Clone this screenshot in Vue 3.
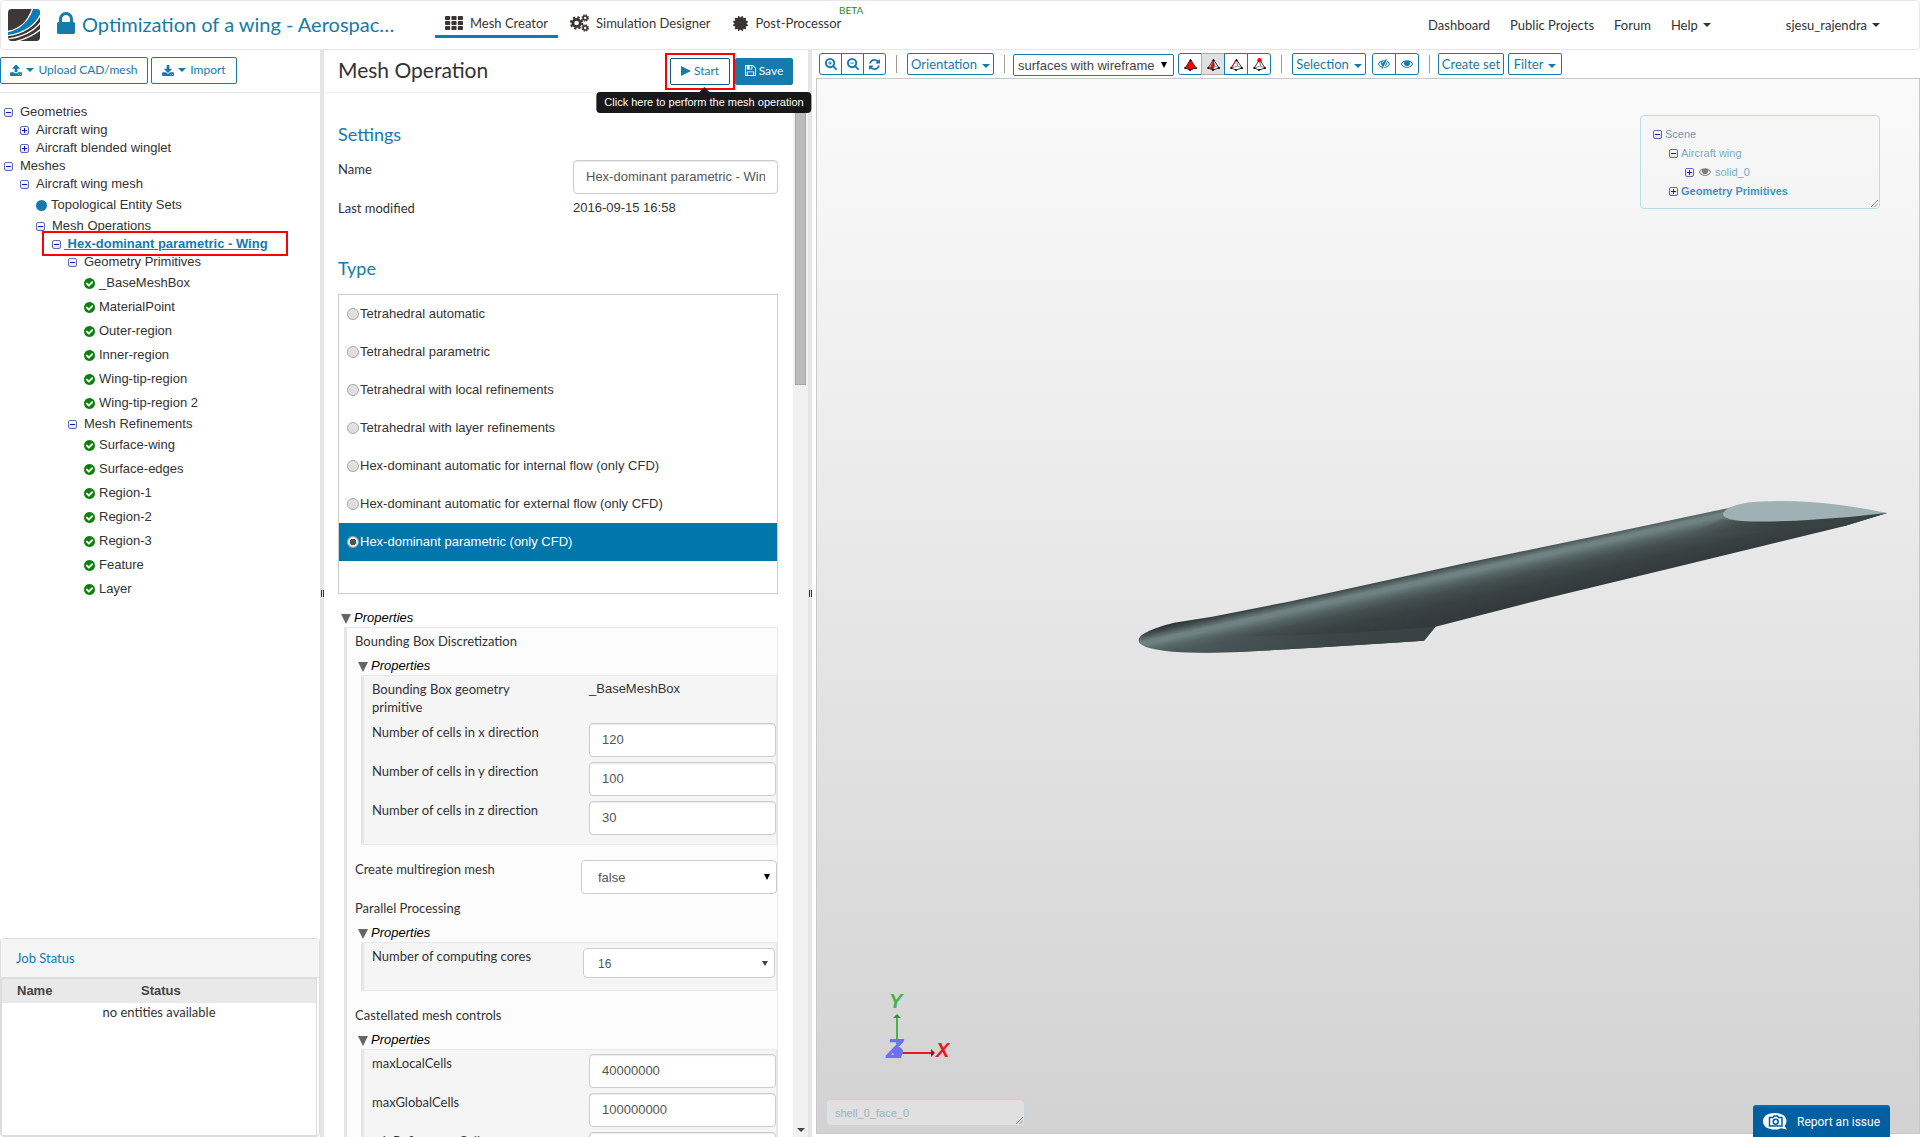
<script setup>
import { ref } from 'vue'

const P = {
  lock: 'M640 768h512v-192q0-106-75-181t-181-75-181 75-75 181v192zm832 96v576q0 40-28 68t-68 28h-960q-40 0-68-28t-28-68v-576q0-40 28-68t68-28h32v-192q0-184 132-316t316-132 316 132 132 316v192h32q40 0 68 28t28 68z',
  check: 'M1412 734q0-28-18-46l-91-90q-19-19-45-19t-45 19l-408 407-226-226q-19-19-45-19t-45 19l-91 90q-18 18-18 46 0 27 18 45l362 362q19 19 45 19 27 0 46-19l543-543q18-18 18-45zm252 162q0 209-103 385.5t-279.5 279.5-385.5 103-385.5-103-279.5-279.5-103-385.5 103-385.5 279.5-279.5 385.5-103 385.5 103 279.5 279.5 103 385.5z',
  refresh: 'M1639 1056q0 5-1 7-64 268-268 434.5t-478 166.5q-146 0-282.5-55t-243.5-157l-129 129q-19 19-45 19t-45-19-19-45v-448q0-26 19-45t45-19h448q26 0 45 19t19 45-19 45l-137 137q71 66 161 102t187 36q134 0 250-65t186-179q11-17 53-117 8-23 30-23h192q13 0 22.5 9.5t9.5 22.5zm25-800v448q0 26-19 45t-45 19h-448q-26 0-45-19t-19-45 19-45l138-138q-148-137-349-137-134 0-250 65t-186 179q-11 17-53 117-8 23-30 23h-199q-13 0-22.5-9.5t-9.5-22.5v-7q65-268 270-434.5t480-166.5q146 0 284 55.5t245 156.5l130-129q19-19 45-19t45 19 19 45z',
  lens: 'M1216 832q0-185-131.5-316.5t-316.5-131.5-316.5 131.5-131.5 316.5 131.5 316.5 316.5 131.5 316.5-131.5 131.5-316.5zm512 832q0 53-37.5 90.5t-90.5 37.5q-54 0-90-38l-343-342q-179 124-399 124-143 0-273.5-55.5t-225-150-150-225-55.5-273.5 55.5-273.5 150-225 225-150 273.5-55.5 273.5 55.5 225 150 150 225 55.5 273.5q0 220-124 399l343 343q37 37 37 90z',
  eye: 'M1664 960q-152-236-381-353 61 104 61 225 0 185-131.5 316.5t-316.5 131.5-316.5-131.5-131.5-316.5q0-121 61-225-229 117-381 353 133 205 333.5 326.5t434.5 121.5 434.5-121.5 333.5-326.5zm-720-384q0-20-14-34t-34-14q-125 0-214.5 89.5t-89.5 214.5q0 20 14 34t34 14 34-14 14-34q0-86 61-147t147-61q20 0 34-14t14-34zm848 384q0 34-20 69-140 230-376.5 368.5t-499.5 138.5-499.5-139-376.5-368q-20-35-20-69t20-69q140-229 376.5-368t499.5-139 499.5 139 376.5 368q20 35 20 69z',
  upload: 'M1344 1472q0-26-19-45t-45-19-45 19-19 45 19 45 45 19 45-19 19-45zm256 0q0-26-19-45t-45-19-45 19-19 45 19 45 45 19 45-19 19-45zm128-224v320q0 40-28 68t-68 28h-1472q-40 0-68-28t-28-68v-320q0-40 28-68t68-28h427q21 56 70.5 92t110.5 36h256q61 0 110.5-36t70.5-92h427q40 0 68 28t28 68zm-325-648q-17 40-59 40h-256v448q0 26-19 45t-45 19h-256q-26 0-45-19t-19-45v-448h-256q-42 0-59-40-17-39 14-69l448-448q18-19 45-19t45 19l448 448q31 30 14 69z',
  download: 'M1344 1344q0-26-19-45t-45-19-45 19-19 45 19 45 45 19 45-19 19-45zm256 0q0-26-19-45t-45-19-45 19-19 45 19 45 45 19 45-19 19-45zm128-224v320q0 40-28 68t-68 28h-1472q-40 0-68-28t-28-68v-320q0-40 28-68t68-28h465l135 136q58 56 136 56t136-56l136-136h464q40 0 68 28t28 68zm-325-569q17 41-14 70l-448 448q-18 19-45 19t-45-19l-448-448q-31-29-14-70 17-39 59-39h256v-448q0-26 19-45t45-19h256q26 0 45 19t19 45v448h256q42 0 59 39z',
  floppy: 'M512 1536h768v-384h-768v384zm896 0h128v-896q0-14-10-38.5t-20-34.5l-281-281q-10-10-34-20t-39-10v416q0 40-28 68t-68 28h-576q-40 0-68-28t-28-68v-416h-128v1280h128v-416q0-40 28-68t68-28h832q40 0 68 28t28 68v416zm-384-928v-320q0-13-9.5-22.5t-22.5-9.5h-192q-13 0-22.5 9.5t-9.5 22.5v320q0 13 9.5 22.5t22.5 9.5h192q13 0 22.5-9.5t9.5-22.5zm640 32v928q0 40-28 68t-68 28h-1344q-40 0-68-28t-28-68v-1344q0-40 28-68t68-28h928q40 0 88 20t76 48l280 280q28 28 48 76t20 88z',
  burst: 'M1504 896l138 135q30 28 20 70-12 41-52 51l-188 48 53 186q12 41-19 70-29 31-70 19l-186-53-48 188q-10 40-51 52-12 2-19 2-31 0-51-22l-135-138-135 138q-28 30-70 20-41-11-51-52l-48-188-186 53q-41 12-70-19-31-29-19-70l53-186-188-48q-40-10-52-51-10-42 20-70l138-135-138-135q-30-28-20-70 12-41 52-51l188-48-53-186q-12-41 19-70 29-31 70-19l186 53 48-188q10-41 51-51 41-12 70 19l135 139 135-139q29-30 70-19 41 10 51 51l48 188 186-53q41-12 70 19 31 29 19 70l-53 186 188 48q40 10 52 51 10 42-20 70z',
}

const tree = [
  { t: 'Geometries', d: 0, k: 'minus' },
  { t: 'Aircraft wing', d: 1, k: 'plus' },
  { t: 'Aircraft blended winglet', d: 1, k: 'plus' },
  { t: 'Meshes', d: 0, k: 'minus' },
  { t: 'Aircraft wing mesh', d: 1, k: 'minus' },
  { t: 'Topological Entity Sets', d: 2, k: 'dot' },
  { t: 'Mesh Operations', d: 2, k: 'minus' },
  { t: 'Hex-dominant parametric - Wing', d: 3, k: 'minus', active: true },
  { t: 'Geometry Primitives', d: 4, k: 'minus' },
  ...['_BaseMeshBox', 'MaterialPoint', 'Outer-region', 'Inner-region', 'Wing-tip-region', 'Wing-tip-region 2'].map((t) => ({ t, d: 5, k: 'check' })),
  { t: 'Mesh Refinements', d: 4, k: 'minus' },
  ...['Surface-wing', 'Surface-edges', 'Region-1', 'Region-2', 'Region-3', 'Feature', 'Layer'].map((t) => ({ t, d: 5, k: 'check' })),
]

const scene = [
  { t: 'Scene', d: 0, k: 'minus', c: 'top-level' },
  { t: 'Aircraft wing', d: 1, k: 'minus', c: 'part' },
  { t: 'solid_0', d: 2, k: 'plus', c: 'part', eye: true },
  { t: 'Geometry Primitives', d: 1, k: 'plus', c: 'strong' },
]

const types = [
  'Tetrahedral automatic',
  'Tetrahedral parametric',
  'Tetrahedral with local refinements',
  'Tetrahedral with layer refinements',
  'Hex-dominant automatic for internal flow (only CFD)',
  'Hex-dominant automatic for external flow (only CFD)',
  'Hex-dominant parametric (only CFD)',
]
const type = ref(types[6])
const opName = ref('Hex-dominant parametric - Wing')
const cells = ref([
  { axis: 'x', n: '120' },
  { axis: 'y', n: '100' },
  { axis: 'z', n: '30' },
])
const limits = ref([
  { name: 'maxLocalCells', n: '40000000' },
  { name: 'maxGlobalCells', n: '100000000' },
  { name: 'minRefinementCells', n: '10' },
])
const picks = [
  { label: 'Pick volumes', fill: 'all' },
  { label: 'Pick faces', fill: 'face' },
  { label: 'Pick edges', fill: 'edge' },
  { label: 'Pick vertices', fill: 'node' },
]
</script>

<template>
  <div class="app">
    <header class="top">
      <svg class="logo" viewBox="0 0 96 96" aria-hidden="true">
        <defs><clipPath id="logoClip"><rect width="96" height="96" rx="11" /></clipPath></defs>
        <g clip-path="url(#logoClip)">
          <rect width="96" height="96" fill="#3d3835" />
          <path d="M74 0C60 38 38 60 0 68V80C46 72 80 50 96 18V0Z" fill="#0b7ab5" />
          <g fill="none" stroke="#fff" stroke-width="4">
            <path d="M74 -2C60 38 38 60 -2 68" />
            <path d="M98 16C82 50 46 74 -2 80" />
            <path d="M98 40C78 66 46 84 -2 90" />
            <path d="M98 61C76 80 52 90 22 98" />
          </g>
        </g>
      </svg>
      <svg class="lock" viewBox="320 128 1152 1408" aria-hidden="true"><path :d="P.lock" /></svg>
      <a class="project" href="#">Optimization of a wing - Aerospac…</a>
      <nav class="tabs">
        <a href="#" class="tab current">
          <svg width="18" height="14" viewBox="0 0 18 14" aria-hidden="true">
            <template v-for="r in 3" :key="r"><rect v-for="c in 3" :key="c" :x="(c - 1) * 6.4" :y="(r - 1) * 5" width="5.2" height="4" rx="1" /></template>
          </svg>
          Mesh Creator
        </a>
        <a href="#" class="tab">
          <svg width="19" height="18" viewBox="0 0 19 18" aria-hidden="true">
            <g fill="none" stroke="#3a3532">
              <circle cx="6.6" cy="9" r="3.7" stroke-width="2.8" />
              <circle cx="6.6" cy="9" r="5.7" stroke-width="2" stroke-dasharray="2.4 2.08" />
              <circle cx="15.2" cy="4" r="2" stroke-width="1.6" />
              <circle cx="15.2" cy="4" r="3.1" stroke-width="1.2" stroke-dasharray="1.5 0.93" />
              <circle cx="15.2" cy="14" r="2" stroke-width="1.6" />
              <circle cx="15.2" cy="14" r="3.1" stroke-width="1.2" stroke-dasharray="1.5 0.93" />
            </g>
          </svg>
          Simulation Designer
        </a>
        <a href="#" class="tab">
          <svg class="burst" width="15" height="15" viewBox="128 128 1536 1536" aria-hidden="true"><path :d="P.burst" /></svg>
          Post-Processor
          <sup class="beta">BETA</sup>
        </a>
      </nav>
      <nav class="links">
        <a href="#">Dashboard</a>
        <a href="#">Public Projects</a>
        <a href="#">Forum</a>
        <a href="#">Help <i class="caret"></i></a>
        <a href="#" class="user">sjesu_rajendra <i class="caret"></i></a>
      </nav>
    </header>

    <div class="work">
      <aside class="side">
        <div class="actions">
          <button class="btn upload"><svg width="12" height="11" viewBox="64 128 1664 1536"><path :d="P.upload" /></svg><i class="caret"></i>Upload CAD/mesh</button>
          <button class="btn import"><svg width="12" height="11" viewBox="64 0 1664 1536"><path :d="P.download" /></svg><i class="caret"></i>Import</button>
        </div>
        <ul class="tree">
          <li v-for="n in tree" :key="n.t" :class="['node', n.k, 'd' + n.d, { active: n.active }]">
            <svg v-if="n.k === 'check'" class="ok" viewBox="128 128 1536 1536"><path :d="P.check" /></svg>
            <span v-else-if="n.k === 'dot'" class="bullet"></span>
            <span v-else :class="['box', n.k]"></span>
            <a v-if="n.active" href="#">&nbsp;{{ n.t }}</a>
            <span v-else class="txt">{{ n.t }}</span>
          </li>
        </ul>
        <section class="jobs">
          <h4>Job Status</h4>
          <div class="jobbox">
            <table>
              <thead><tr><th class="jn">Name</th><th>Status</th></tr></thead>
              <tbody><tr><td colspan="2">no entities available</td></tr></tbody>
            </table>
          </div>
        </section>
      </aside>

      <div class="split"><i></i></div>

      <main class="panel">
        <div class="phead">
          <h2>Mesh Operation</h2>
          <div class="startwrap">
            <button class="btn start"><svg width="10" height="10" viewBox="0 0 10 10"><path d="M0 0L10 5L0 10Z" /></svg>Start</button>
            <div class="tip" role="tooltip">Click here to perform the mesh operation</div>
          </div>
          <button class="btn save"><svg width="11" height="11" viewBox="128 128 1536 1536"><path :d="P.floppy" /></svg>Save</button>
        </div>
        <div class="pbody">
          <form class="form" @submit.prevent>
            <h3 class="first">Settings</h3>
            <div class="row set"><label for="opname">Name</label><input id="opname" v-model="opName" class="ctl" type="text" /></div>
            <div class="row set"><span class="lab">Last modified</span><span class="val">2016-09-15 16:58</span></div>
            <h3 class="second">Type</h3>
            <div class="types">
              <label v-for="t in types" :key="t" :class="{ on: t === type }"><input v-model="type" type="radio" name="type" :value="t" />{{ t }}</label>
            </div>

            <details class="main" open>
              <summary>Properties</summary>
              <div class="props outer">
                <div class="sect">Bounding Box Discretization</div>
                <details open>
                  <summary>Properties</summary>
                  <div class="props inner">
                    <div class="row"><span class="lab">Bounding Box geometry primitive</span><span class="val">_BaseMeshBox</span></div>
                    <div v-for="c in cells" :key="c.axis" class="row">
                      <label :for="'cells-' + c.axis">Number of cells in {{ c.axis }} direction</label>
                      <input :id="'cells-' + c.axis" v-model="c.n" class="ctl" type="text" />
                    </div>
                  </div>
                </details>
                <div class="row multi">
                  <label for="multi">Create multiregion mesh</label>
                  <div class="sel"><select id="multi" class="ctl"><option>false</option><option>true</option></select></div>
                </div>
                <div class="sect">Parallel Processing</div>
                <details open>
                  <summary>Properties</summary>
                  <div class="props inner">
                    <div class="row cores">
                      <label for="cores">Number of computing cores</label>
                      <div class="sel small"><select id="cores" class="ctl"><option>16</option><option>32</option></select></div>
                    </div>
                  </div>
                </details>
                <div class="sect">Castellated mesh controls</div>
                <details open>
                  <summary>Properties</summary>
                  <div class="props inner">
                    <div v-for="l in limits" :key="l.name" class="row">
                      <label :for="l.name">{{ l.name }}</label>
                      <input :id="l.name" v-model="l.n" class="ctl" type="text" />
                    </div>
                  </div>
                </details>
              </div>
            </details>
          </form>
          <div class="bar"><div class="thumb"></div><i class="down"></i></div>
        </div>
      </main>

      <div class="split"><i></i></div>

      <section class="viewer">
        <div class="tools">
          <div class="group g22">
            <button aria-label="Zoom in"><svg width="12" height="12" viewBox="64 128 1664 1664"><path :d="P.lens" /><path d="M704 576h128v192h192v128h-192v192h-128v-192h-192v-128h192z" /></svg></button>
            <button aria-label="Zoom out"><svg width="12" height="12" viewBox="64 128 1664 1664"><path :d="P.lens" /><path d="M512 768h512v128h-512z" /></svg></button>
            <button aria-label="Reset view"><svg width="11" height="11" viewBox="128 128 1536 1536"><path :d="P.refresh" /></svg></button>
          </div>
          <i class="sep"></i>
          <button class="tb orient">Orientation <i class="caret"></i></button>
          <i class="sep"></i>
          <div class="mode"><select aria-label="Render mode"><option>surfaces with wireframe</option><option>surfaces</option></select></div>
          <div class="group g23">
            <button v-for="p in picks" :key="p.fill" :aria-label="p.label" :class="{ pressed: p.fill === 'face' }">
              <svg width="13" height="13" viewBox="0 0 13 13">
                <path d="M6.5 1.5L1.2 10L6 12L12 10Z" :fill="p.fill === 'all' ? '#f00' : '#fff'" />
                <path v-if="p.fill === 'face'" d="M6.5 1.5L2.6 10.6L6.4 12L7.6 8Z" fill="#f00" />
                <path d="M6.5 1.5L1.2 10L6 12L12 10Z" fill="none" stroke="#222" stroke-width="0.9" />
                <path v-if="p.fill !== 'all'" d="M6.5 1.5L7.6 8M1.2 10L7.6 8L12 10" fill="none" stroke="#555" stroke-width="0.7" />
                <path v-if="p.fill === 'edge'" d="M6.5 1.5L1.2 10" stroke="#f00" stroke-width="1" />
                <circle v-for="(c, i) in [[1.2, 10], [6, 12], [12, 10]]" :key="i" :cx="c[0]" :cy="c[1]" r="1" fill="#000" />
                <circle cx="6.5" cy="2.2" :r="p.fill === 'node' ? 2.2 : 1" :fill="p.fill === 'node' ? '#f00' : '#000'" />
              </svg>
            </button>
          </div>
          <i class="sep"></i>
          <button class="tb pick">Selection <i class="caret"></i></button>
          <div class="group g23 eyes">
            <button aria-label="Hide selection">
              <svg width="12" height="10" viewBox="0 230 1792 1460"><path :d="P.eye" /><path d="M1390 240L730 1660" stroke="#fff" stroke-width="170" /><path d="M1250 240L590 1660" stroke="#157aac" stroke-width="170" /></svg>
            </button>
            <button aria-label="Show all"><svg width="12" height="8" viewBox="0 384 1792 1152"><path :d="P.eye" /><circle cx="896" cy="832" r="330" /></svg></button>
          </div>
          <i class="sep"></i>
          <button class="tb create">Create set</button>
          <button class="tb filter">Filter <i class="caret"></i></button>
        </div>

        <div class="stage">
          <svg class="wing" viewBox="1138 500 750 154" aria-label="Wing geometry">
            <defs>
              <linearGradient id="skin" gradientUnits="userSpaceOnUse" x1="1464.4" y1="558.3" x2="1481.7" y2="636.4">
                <stop offset="0" stop-color="#2b3133" />
                <stop offset="0.06" stop-color="#3f494a" />
                <stop offset="0.15" stop-color="#6f8181" />
                <stop offset="0.19" stop-color="#6f8181" />
                <stop offset="0.27" stop-color="#566464" />
                <stop offset="0.36" stop-color="#444f50" />
                <stop offset="0.5" stop-color="#394243" />
                <stop offset="0.7" stop-color="#33393c" />
                <stop offset="1" stop-color="#33393c" />
              </linearGradient>
              <linearGradient id="rib" x1="0" x2="1" y1="0" y2="0">
                <stop offset="0" stop-color="#6a7b7b" stop-opacity="0" />
                <stop offset="0.25" stop-color="#4c5a5b" stop-opacity="0.6" />
                <stop offset="0.6" stop-color="#3c4647" />
                <stop offset="1" stop-color="#394243" />
              </linearGradient>
              <linearGradient id="under" x1="0" x2="1" y1="0" y2="0">
                <stop offset="0" stop-color="#3b4546" stop-opacity="0" />
                <stop offset="0.5" stop-color="#394243" />
                <stop offset="1" stop-color="#394243" />
              </linearGradient>
            </defs>
            <path d="M1138.6 640C1139 635 1149 629 1174 622.7L1212 616.7L1288.6 601.7L1467 562.7L1620 531L1730 507.7L1760 503L1887 513L1844.7 526L1671 568.3L1543.7 599L1435.5 626.7L1424 640.7L1385.5 643.3L1314 647.7L1253 651.3Q1222 653 1202 652.7Q1180 652.5 1166 651C1147 648.5 1138 645 1138.6 640Z" fill="url(#skin)" />
            <path d="M1150 646L1220 637Q1340 635 1435.5 626.7L1424 640.7L1385.5 643.3L1314 647.7L1253 651.3Q1222 653 1202 652.7Q1180 652.5 1166 651Q1154 649 1150 646Z" fill="url(#rib)" />
            <path d="M1690 533Q1780 531 1844.7 526L1887 513L1829 518L1740 521L1722 519Z" fill="url(#under)" />
            <path d="M1723 514C1724 508 1738 502.5 1760 501.4Q1800 499.5 1840 505Q1866 508.5 1887 513Q1850 517.5 1815 519.5Q1780 522 1752 521.5Q1723 520.5 1723 514Z" fill="#9fb1b5" />
          </svg>

          <div class="scene">
            <div v-for="s in scene" :key="s.t" :class="['snode', 's' + s.d, s.c]">
              <span :class="['box', s.k]"></span>
              <svg v-if="s.eye" class="seye" viewBox="0 384 1792 1152"><path :d="P.eye" /><circle cx="896" cy="832" r="330" /></svg>
              <span>{{ s.t }}</span>
            </div>
            <svg class="grip" viewBox="0 0 8 8"><path d="M0 8L8 0M4 8L8 4" /></svg>
          </div>

          <svg class="axes" viewBox="0 0 80 80" aria-label="Axis orientation">
            <path d="M17 60V34" stroke="#46b446" stroke-width="2" />
            <path d="M13 34L17 30L21 34Z" fill="#3c8f3c" />
            <path d="M18 69H51" stroke="#e81a1a" stroke-width="2" />
            <path d="M51 65L55 69L51 73Z" fill="#9c1414" />
            <circle cx="18" cy="68" r="5" fill="#6f6ff5" />
            <text x="9" y="24" class="ay">Y</text>
            <text x="6" y="74" class="az">Z</text>
            <text x="56" y="73" class="ax">X</text>
          </svg>

          <div class="picked">shell_0_face_0<svg class="grip" viewBox="0 0 8 8"><path d="M0 8L8 0M4 8L8 4" /></svg></div>
        </div>
      </section>
    </div>

    <button class="report">
      <svg width="24" height="17" viewBox="0 0 24 17" aria-hidden="true">
        <path d="M12 0C19 0 23.5 3 23.5 8Q23.5 11 21.5 13L24 16.5L18 15.3Q15 16.5 12 16.5C5 16.5 0 13.5 0 8.2S5 0 12 0Z" fill="#fff" />
        <path d="M6.5 4.5H10L11 3H14.5L15.5 4.5H19V13H6.5Z" fill="none" stroke="#005f9f" stroke-width="1.5" />
        <circle cx="12.7" cy="8.7" r="2.5" fill="none" stroke="#005f9f" stroke-width="1.5" />
      </svg>
      Report an issue
    </button>
  </div>
</template>

<style>
body {
  background: #fff;
}
</style>

<style scoped>
.app {
  --blue: #157aac;
  --sans: "Liberation Sans", Arial, sans-serif;
  --lato: Lato, "Liberation Sans", sans-serif;
  height: 100vh;
  display: flex;
  flex-direction: column;
  overflow: hidden;
  font: 13px/18px var(--sans);
  color: #333;
  position: relative;
}
.app *,
.app *::before,
.app *::after {
  box-sizing: border-box;
}
a {
  color: inherit;
  text-decoration: none;
}
h2,
h3,
h4 {
  margin: 0;
  font-family: var(--lato);
  font-weight: 400;
}
button {
  cursor: pointer;
  padding: 0;
}
svg {
  fill: currentColor;
  flex: none;
}
.caret {
  display: inline-block;
  border: 4px solid transparent;
  border-top-color: currentColor;
  border-bottom: 0;
}

/* top bar */
.top {
  height: 50px;
  flex: none;
  border: 1px solid #e7e7e7;
  border-radius: 4px;
  display: flex;
  align-items: center;
  padding: 0 39px 0 7px;
  font-family: var(--lato);
}
.logo {
  width: 32px;
  height: 32px;
}
.lock {
  width: 18px;
  height: 22px;
  margin: 0 7px 4px 17px;
  color: var(--blue);
}
.project {
  color: var(--blue);
  font-size: 20px;
  line-height: 26px;
  flex: none;
  width: 353px;
  padding-bottom: 3px;
}
.tabs {
  display: flex;
  gap: 2px;
  height: 100%;
  align-items: flex-start;
}
.tab {
  position: relative;
  display: flex;
  align-items: center;
  gap: 7px;
  height: 37px;
  padding: 10px 10px 0;
  border-bottom: 3px solid transparent;
  white-space: nowrap;
  color: #3a3532;
}
.tab.current {
  border-color: var(--blue);
}
.burst {
  margin-right: 1px;
}
.beta {
  position: absolute;
  right: -12px;
  top: 2px;
  font-size: 10px;
  line-height: 14px;
  color: #1e8a1e;
}
.links {
  margin-left: auto;
  display: flex;
  gap: 20px;
}
.links a {
  display: flex;
  align-items: center;
  gap: 5px;
}
.links .user {
  margin-left: 55px;
}

.work {
  flex: 1;
  min-height: 0;
  display: flex;
}
.split {
  width: 4px;
  flex: none;
  background: #e5e5e5;
  display: flex;
  align-items: center;
  justify-content: center;
}
.split i {
  width: 3px;
  height: 7px;
  border: solid #333;
  border-width: 0 1px;
}

.btn {
  height: 27px;
  display: flex;
  align-items: center;
  justify-content: center;
  padding-bottom: 1px;
  background: #fff;
  color: var(--blue);
  border: 1px solid var(--blue);
  border-radius: 2px;
  font: 12px/18px var(--lato);
  white-space: nowrap;
}

/* left column */
.side {
  width: 320px;
  flex: none;
  display: flex;
  flex-direction: column;
}
.actions {
  display: flex;
  gap: 3px;
  height: 43px;
  padding-top: 7px;
  border-bottom: 1px solid #e5e5e5;
}
.actions .btn {
  gap: 4px;
}
.upload {
  width: 148px;
}
.import {
  width: 86px;
}
.tree {
  list-style: none;
  margin: 10px 0 0;
  padding: 0;
  flex: 1;
  min-height: 0;
}
.node {
  position: relative;
  display: flex;
  align-items: center;
  height: 18px;
  padding-left: 4px;
}
.node.check,
.node.dot {
  height: 24px;
}
.d1 { padding-left: 20px; }
.d2 { padding-left: 36px; }
.d3 { padding-left: 52px; }
.d4 { padding-left: 68px; }
.d5 { padding-left: 84px; }
.box {
  position: relative;
  width: 9px;
  height: 9px;
  flex: none;
  border: 1px solid #5a6cae;
  border-radius: 2px;
  margin: 1px 7px 0 0;
  background: linear-gradient(#fff, #e3e3ee);
}
.box::before {
  content: "";
  position: absolute;
  left: 1px;
  top: 3px;
  width: 5px;
  height: 1px;
  background: #1212c8;
}
.box.plus::after {
  content: "";
  position: absolute;
  left: 3px;
  top: 1px;
  width: 1px;
  height: 5px;
  background: #1212c8;
}
.bullet {
  width: 11px;
  height: 11px;
  border-radius: 50%;
  background: var(--blue);
  margin-right: 4px;
}
.ok {
  width: 11px;
  height: 11px;
  color: #0b820b;
  margin-right: 4px;
}
.active a {
  color: var(--blue);
  font-weight: 700;
  text-decoration: underline;
  margin-left: -4px;
}
.active::after {
  content: "";
  position: absolute;
  left: 42px;
  top: -4px;
  width: 246px;
  height: 25px;
  border: 2px solid #f00;
  pointer-events: none;
}
.jobs {
  flex: none;
  height: 199px;
  border: 1px solid #ddd;
  border-radius: 4px;
  display: flex;
  flex-direction: column;
}
.jobs h4 {
  height: 39px;
  background: #f5f5f5;
  border-bottom: 1px solid #ddd;
  padding: 10px 15px;
  font-size: 13px;
  color: var(--blue);
}
.jobbox {
  flex: 1;
  margin-right: 2px;
  border: 1px solid #ddd;
}
.jobbox table {
  width: 100%;
  border-collapse: collapse;
  table-layout: fixed;
}
.jobbox th {
  background: #e9e9e9;
  height: 24px;
  padding: 0;
  text-align: center;
  color: #444;
}
.jobbox th.jn {
  width: 104px;
  text-align: left;
  padding-left: 15px;
}
.jobbox th:last-child {
  text-align: left;
  padding-left: 35px;
}
.jobbox td {
  padding: 0;
  text-align: center;
  font: 13px/18px var(--lato);
}

/* middle column */
.panel {
  width: 484px;
  flex: none;
  display: flex;
  flex-direction: column;
}
.phead {
  height: 43px;
  flex: none;
  border-bottom: 1px solid #ececec;
  display: flex;
  align-items: center;
  padding: 0 15px 0 14px;
}
.phead h2 {
  font-size: 21px;
  line-height: 28px;
  margin-right: auto;
  padding-bottom: 2px;
}
.startwrap {
  position: relative;
  margin-right: 5px;
}
.startwrap::before {
  content: "";
  position: absolute;
  inset: -5px;
  border: 2px solid #f00;
  z-index: 2;
  pointer-events: none;
}
.start {
  width: 60px;
  gap: 3px;
  border-color: #0f5a80;
}
.save {
  width: 58px;
  gap: 3px;
  background: var(--blue);
  color: #fff;
}
.tip {
  position: absolute;
  z-index: 3;
  top: 34px;
  left: 34px;
  transform: translateX(-50%);
  width: max-content;
  height: 21px;
  padding: 0 8px;
  background: rgba(0, 0, 0, 0.9);
  border-radius: 4px;
  color: #fff;
  font-size: 11px;
  line-height: 20px;
}
.tip::before {
  content: "";
  position: absolute;
  left: 50%;
  top: -5px;
  margin-left: -5px;
  border: 5px solid transparent;
  border-top: 0;
  border-bottom-color: #1a1a1a;
}
.pbody {
  flex: 1;
  min-height: 0;
  display: flex;
}
.form {
  flex: 1;
  min-width: 0;
  overflow: hidden;
  padding: 29px 15px 0 14px;
}
.form h3 {
  color: var(--blue);
  font-size: 18px;
  line-height: 24px;
  margin-bottom: 14px;
}
.form h3.second {
  margin-top: 37px;
}
.row {
  display: grid;
  grid-template-columns: 1fr 187px;
  align-items: start;
  margin-bottom: 5px;
}
.row label,
.row .lab,
.sect {
  font: 13px/18px var(--lato);
  padding-bottom: 2px;
  max-width: 180px;
}
.sect {
  padding: 0;
  max-width: none;
}
.row.set {
  grid-template-columns: 1fr 205px;
}
.row.multi {
  grid-template-columns: 1fr 196px;
}
.row.cores {
  grid-template-columns: 1fr 193px;
}
.ctl {
  display: block;
  width: 100%;
  height: 34px;
  margin: 0;
  padding: 0 12px 1px;
  border: 1px solid #ccc;
  border-radius: 4px;
  background: #fff;
  box-shadow: inset 0 1px 1px rgba(0, 0, 0, 0.08);
  color: #555;
  font: 13px/18px var(--sans);
  outline: 0;
  appearance: none;
}
.sel {
  position: relative;
}
.sel .ctl {
  padding: 1px 16px 0;
  box-shadow: none;
}
.sel::after,
.mode::after {
  content: "";
  position: absolute;
  right: 7px;
  top: 14px;
  border: 3px solid transparent;
  border-top: 6px solid #000;
  border-bottom: 0;
  pointer-events: none;
}
.sel.small {
  height: 34px;
  padding: 1px 1px 0 0;
}
.sel.small .ctl {
  height: 30px;
  padding-left: 14px;
  font-size: 12px;
}
.sel.small::after {
  right: 8px;
  border-width: 5px 3px 0;
  border-top-color: #444;
}
.types {
  height: 300px;
  border: 1px solid #ccc;
}
.types label {
  display: flex;
  align-items: center;
  height: 38px;
  padding-left: 8px;
}
.types label.on {
  background: #0076aa;
  color: #fff;
}
.types input {
  appearance: none;
  width: 12px;
  height: 12px;
  margin: 0 1px 1px 0;
  border: 1px solid #a5a5a5;
  border-radius: 50%;
  background: linear-gradient(#e2e2e2, #dcdcdc);
  box-shadow: inset 0 0 0 1px #e8e8e8;
}
.types input:checked {
  background: radial-gradient(#555 0 3px, #e6e6e6 3px);
}
details {
  margin-left: 3px;
}
details.main {
  margin-top: 15px;
}
summary {
  display: flex;
  align-items: center;
  gap: 3px;
  list-style: none;
  font-style: italic;
  color: #000;
  cursor: pointer;
}
.props summary {
  padding-top: 7px;
}
summary::before {
  content: "";
  border: solid transparent;
  border-width: 10px 5px 0;
  border-top-color: #666;
  margin-top: 2px;
}
.props {
  margin-left: 3px;
  border: 1px solid #e9e9e9;
  border-left: 3px solid #e5e5e5;
  padding: 4px 0 0 8px;
}
.outer {
  background: #fcfcfc;
}
.inner {
  background: #f5f5f5;
  margin-bottom: 15px;
  padding-bottom: 4px;
}
.bar {
  width: 15px;
  flex: none;
  background: #f1f1f1;
  display: flex;
  flex-direction: column;
  align-items: center;
  justify-content: space-between;
  padding: 14px 0 5px;
}
.thumb {
  width: 11px;
  height: 278px;
  background: #bcbcbc;
  border: 1px solid #a8a8a8;
}
.down {
  border: 4px solid transparent;
  border-top-color: #444;
  border-bottom: 0;
}

/* viewer */
.viewer {
  flex: 1;
  min-width: 0;
  display: flex;
  flex-direction: column;
  padding: 0 0 3px 4px;
}
.tools {
  height: 28px;
  flex: none;
  display: flex;
  align-items: flex-start;
  padding: 3px 0 0 3px;
}
.tools button {
  height: 22px;
  border: 1px solid var(--blue);
  background: #fff;
  color: var(--blue);
  font: 13px/18px var(--lato);
  display: flex;
  align-items: center;
  justify-content: center;
}
.group {
  display: flex;
}
.group button {
  width: 24px;
  margin-right: -1px;
}
.g22 button {
  width: 23px;
}
.group button:first-child {
  border-radius: 3px 0 0 3px;
}
.group button:last-child {
  border-radius: 0 3px 3px 0;
  margin-right: 0;
}
.group .pressed {
  background: #e0e0e0;
  border-color: #aaa;
}
.sep {
  width: 1px;
  height: 18px;
  margin: 2px 10px 0;
  background: #a39c93;
}
.tools .tb {
  gap: 5px;
  border-radius: 2px;
  white-space: nowrap;
}
.tb .caret {
  margin-top: 3px;
}
.orient { width: 87px; }
.pick { width: 74px; }
.eyes { margin-left: 6px; }
.create {
  width: 66px;
  margin-left: -2px;
}
.filter {
  width: 54px;
  margin-left: 4px;
}
.mode {
  position: relative;
  width: 161px;
  margin: 1px 4px 0 -2px;
}
.mode select {
  appearance: none;
  width: 100%;
  height: 22px;
  border: 1px solid var(--blue);
  border-radius: 2px;
  background: #fff;
  padding: 1px 4px 0;
  font: 13px/18px var(--sans);
  color: #444;
}
.mode::after {
  top: 8px;
}
.stage {
  position: relative;
  flex: 1;
  border: 1px solid #c8c8c8;
  background: linear-gradient(#fafafa, #d2d2d2);
  overflow: hidden;
}
.wing {
  position: absolute;
  left: 321px;
  top: 421px;
  width: 750px;
  height: 154px;
}
.scene {
  position: absolute;
  right: 39px;
  top: 36px;
  width: 240px;
  height: 94px;
  padding: 8px 0 0 12px;
  border: 1px solid #b9dce8;
  border-radius: 4px;
  background: rgba(245, 245, 245, 0.8);
  font-size: 11px;
}
.snode {
  display: flex;
  align-items: center;
  height: 19px;
}
.snode .box {
  margin: 2px 3px 0 0;
}
.s1 { padding-left: 16px; }
.s2 { padding-left: 32px; }
.top-level { color: #7199ab; }
.part { color: #76aec8; }
.strong {
  color: #4097bf;
  font-weight: 700;
}
.seye {
  width: 12px;
  height: 8px;
  margin: 0 4px 0 2px;
  color: #7a7a70;
}
.grip {
  position: absolute;
  right: 1px;
  bottom: 1px;
  width: 7px;
  height: 7px;
  fill: none;
  stroke: #777;
  stroke-width: 1;
}
.axes {
  position: absolute;
  left: 63px;
  bottom: 69px;
  width: 80px;
  height: 80px;
}
.axes text {
  font: italic 700 20px "Liberation Sans", Arial, sans-serif;
}
.ay { fill: #46b446; }
.ax { fill: #e81a1a; }
.axes .az {
  fill: #6f6ff5;
  font-size: 28px;
}
.picked {
  position: absolute;
  left: 9px;
  bottom: 7px;
  width: 199px;
  height: 27px;
  padding: 0 8px;
  border: 1px solid #c5d6dc;
  border-radius: 4px;
  background: #e0e0e0;
  color: #9bb3bd;
  font-size: 11px;
  line-height: 26px;
}
.report {
  position: absolute;
  right: 30px;
  bottom: 0;
  width: 137px;
  height: 32px;
  display: flex;
  align-items: center;
  gap: 10px;
  padding: 0 0 1px 10px;
  border: 0;
  border-top: 2px solid #006db3;
  border-radius: 3px 3px 0 0;
  background: #005f9f;
  color: #fff;
  font: 12px/18px Roboto, sans-serif;
  white-space: nowrap;
}
</style>
